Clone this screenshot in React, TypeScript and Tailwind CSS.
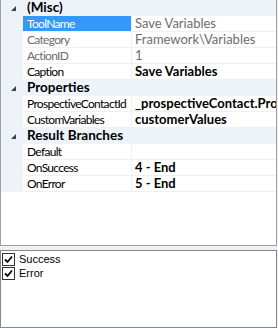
import React from "react";

type Row =
  | { kind: "cat"; label: string }
  | { kind: "prop"; name: string; value: string; readOnly?: boolean; bold?: boolean; selected?: boolean };

const rows: Row[] = [
  { kind: "cat", label: "(Misc)" },
  { kind: "prop", name: "ToolName", value: "Save Variables", readOnly: true, selected: true },
  { kind: "prop", name: "Category", value: "Framework\\Variables", readOnly: true },
  { kind: "prop", name: "ActionID", value: "1", readOnly: true },
  { kind: "prop", name: "Caption", value: "Save Variables", bold: true },
  { kind: "cat", label: "Properties" },
  { kind: "prop", name: "ProspectiveContactId", value: "_prospectiveContact.ProspectiveContactId", bold: true },
  { kind: "prop", name: "CustomVariables", value: "customerValues", bold: true },
  { kind: "cat", label: "Result Branches" },
  { kind: "prop", name: "Default", value: "" },
  { kind: "prop", name: "OnSuccess", value: "4 - End", bold: true },
  { kind: "prop", name: "OnError", value: "5 - End", bold: true },
];

function Expander() {
  return (
    <svg width="5" height="5" viewBox="0 0 5 5" className="block">
      <polygon points="5,0 5,5 0,5" fill="#404040" />
    </svg>
  );
}

function Check() {
  return (
    <span className="flex h-[13px] w-[13px] items-center justify-center border border-[#333] bg-white">
      <svg width="9" height="9" viewBox="0 0 9 9">
        <path d="M1 4.5 L3.5 7 L8 1.5" stroke="#000" strokeWidth="1.8" fill="none" />
      </svg>
    </span>
  );
}

export default function App() {
  return (
    <div className="flex h-[328px] w-[278px] flex-col bg-[#f0f0f0] font-['Lato',sans-serif]">
      {/* property grid */}
      <div className="h-[246px] w-[277px] border-b border-l border-r border-[#a0a0a0] bg-white">
        {rows.map((row, i) =>
          row.kind === "cat" ? (
            <div key={i} className="flex h-[16px] items-center bg-[#eef3fa]">
              <div className="flex w-[22px] justify-center pl-[2px]">
                <Expander />
              </div>
              <span className="pl-[4px] text-[13.5px] font-bold leading-none text-black">{row.label}</span>
            </div>
          ) : (
            <div key={i} className="flex h-[16px] border-b border-[#f0f0f0]">
              <div className="w-[22px] bg-[#eef3fa]" />
              <div
                className={`flex w-[108px] items-center overflow-hidden whitespace-nowrap pl-[4px] leading-none ${
                  row.selected ? "bg-[#3399ff] text-white" : row.readOnly ? "text-[#6d6d6d]" : "text-black"
                }`}
              >
                <span className="text-[12px] tracking-[-0.7px]">{row.name}</span>
              </div>
              <div className="w-px bg-[#f0f0f0]" />
              <div
                className={`flex flex-1 items-center overflow-hidden whitespace-nowrap pl-[3px] text-[13px] leading-none ${
                  row.readOnly ? "text-[#6d6d6d]" : "text-black"
                } ${row.bold ? "font-bold" : ""}`}
              >
                {row.value}
              </div>
            </div>
          )
        )}
      </div>

      {/* checked list */}
      <div className="mt-[4px] h-[78px] w-[277px] border border-[#828790] bg-white pt-px font-['Liberation_Sans',sans-serif] text-[11px] text-black">
        {["Success", "Error"].map((s) => (
          <div key={s} className="flex h-[14px] items-center gap-[4px] pl-[1px]">
            <Check />
            <span className="leading-none">{s}</span>
          </div>
        ))}
      </div>
    </div>
  );
}
